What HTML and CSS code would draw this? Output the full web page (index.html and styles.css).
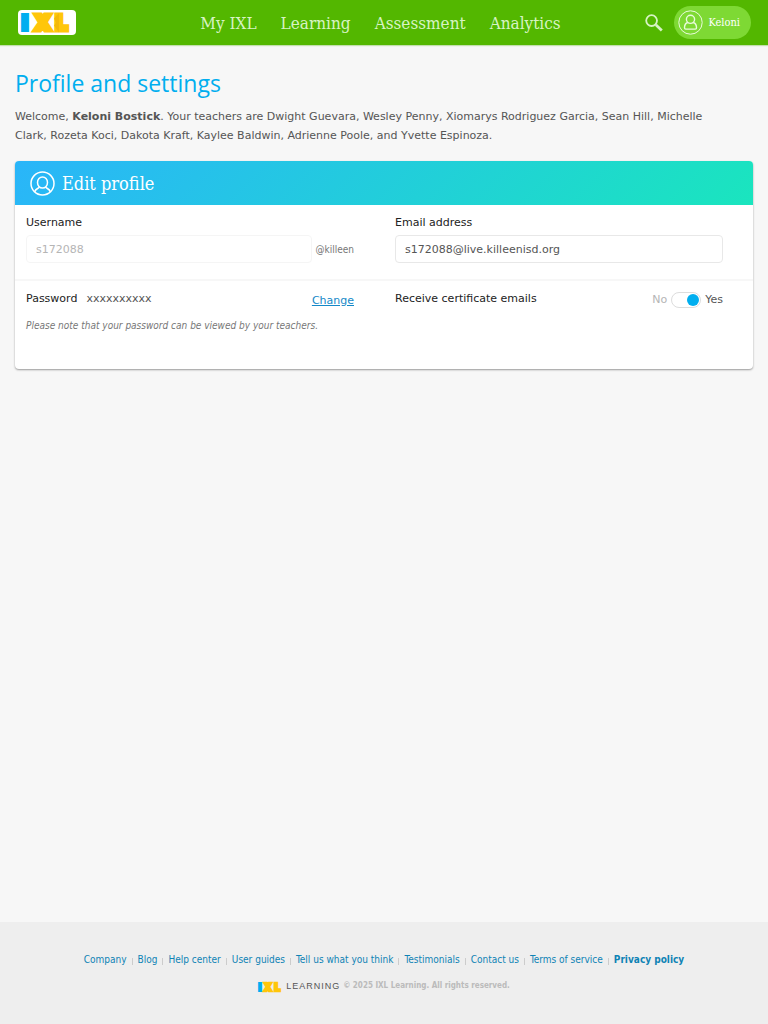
FILE: index.html
```html
<!DOCTYPE html>
<html lang="en">
<head>
    <meta charset="UTF-8">
    <meta name="viewport" content="width=device-width, initial-scale=1.0">
    <title>IXL | Profile and settings</title>
    <link rel="stylesheet" href="styles.css">
</head>
<body>
    <header class="header">
        <a href="#" class="logo" aria-label="IXL">
            <svg width="58" height="25" viewBox="0 0 58 25">
                <rect width="58" height="25" rx="4" fill="#fff"/>
                <text class="logo-letter blue" x="4" y="20">I</text>
                <text class="logo-letter gold" x="17" y="20">X</text>
                <text class="logo-letter gold" x="38" y="20">L</text>
                <path d="M36 8.500l5-5.500v19.500l-5-7 2-2.700z" fill="#f3b909"/>
            </svg>
        </a>
        <nav class="nav">
            <a href="#">My IXL</a>
            <a href="#">Learning</a>
            <a href="#">Assessment</a>
            <a href="#">Analytics</a>
        </nav>
        <div class="tools">
            <button type="button" class="search" aria-label="Search">
                <svg width="18" height="18" viewBox="0 0 18 18" fill="none" stroke="#d7f3c3">
                    <circle cx="6.6" cy="6.6" r="5.4" stroke-width="1.8"/>
                    <path d="M10.8 10.8l6 5.6" stroke-width="2.8"/>
                </svg>
            </button>
            <button type="button" class="user">
                <svg width="25" height="25" viewBox="0 0 25 25" fill="none" stroke="#e9fbdc">
                    <circle cx="12.500" cy="12.500" r="11.700" stroke-width="1"/>
                    <circle cx="12.500" cy="9.300" r="4.100" stroke-width="1.400"/>
                    <path d="M9.800 12.500c-2.300.7-3.300 2.500-3.300 5.300 0 .8.400 1.300 1.200 1.300h9.600c.8 0 1.200-.5 1.200-1.300 0-2.800-1-4.600-3.300-5.300" stroke-width="1.400"/>
                </svg>
                <span>Keloni</span>
            </button>
        </div>
    </header>

    <main class="content">
        <h1>Profile and settings</h1>
        <p class="welcome">Welcome, <strong>Keloni Bostick</strong>. Your teachers are Dwight Guevara, Wesley Penny, Xiomarys Rodriguez Garcia, Sean Hill, Michelle Clark, Rozeta Koci, Dakota Kraft, Kaylee Baldwin, Adrienne Poole, and Yvette Espinoza.</p>

        <form class="card">
            <div class="card-header">
                <svg width="25" height="25" viewBox="0 0 25 25" fill="none" stroke="#fff" stroke-width="1.500">
                    <circle cx="12.500" cy="12.500" r="11.500"/>
                    <ellipse cx="12.500" cy="11.500" rx="5" ry="5.600"/>
                    <path d="M9.500 16c-.5 1.300-4 1.500-4.800 4.800M15.500 16c.5 1.300 4 1.500 4.800 4.800"/>
                </svg>
                <h2>Edit profile</h2>
            </div>
            <div class="row">
                <div class="cell">
                    <label for="username">Username</label>
                    <div class="field">
                        <input type="text" id="username" value="s172088" disabled>
                        <span class="suffix">@killeen</span>
                    </div>
                </div>
                <div class="cell">
                    <label for="email">Email address</label>
                    <div class="field">
                        <input type="email" id="email" value="s172088@live.killeenisd.org">
                    </div>
                </div>
            </div>
            <div class="row last">
                <div class="cell">
                    <div class="line">
                        <span class="name">Password</span>
                        <span class="mask">xxxxxxxxxx</span>
                        <a href="#" class="change">Change</a>
                    </div>
                    <p class="note">Please note that your password can be viewed by your teachers.</p>
                </div>
                <div class="cell">
                    <div class="line">
                        <label for="certs">Receive certificate emails</label>
                        <div class="switch">
                            <span class="no">No</span>
                            <input type="checkbox" id="certs" checked>
                            <span>Yes</span>
                        </div>
                    </div>
                </div>
            </div>
        </form>
    </main>

    <footer class="footer">
        <ul class="links">
            <li><a href="#">Company</a></li>
            <li><a href="#">Blog</a></li>
            <li><a href="#">Help center</a></li>
            <li><a href="#">User guides</a></li>
            <li><a href="#">Tell us what you think</a></li>
            <li><a href="#">Testimonials</a></li>
            <li><a href="#">Contact us</a></li>
            <li><a href="#">Terms of service</a></li>
            <li><a href="#"><strong>Privacy policy</strong></a></li>
        </ul>
        <div class="legal">
            <svg width="25" height="11" viewBox="0 0 50 22">
                <text class="logo-letter blue" x="1" y="19">I</text>
                <text class="logo-letter gold" x="12" y="19">X</text>
                <text class="logo-letter gold" x="33" y="19">L</text>
            </svg>
            <span class="learning">LEARNING</span>
            <span>© 2025 IXL Learning. All rights reserved.</span>
        </div>
    </footer>
</body>
</html>
```
FILE: styles.css
```css
* {
    box-sizing: border-box;
}
body {
    margin: 0;
    min-height: 100vh;
    display: flex;
    flex-direction: column;
    background-color: #f7f7f7;
    font-family: "DejaVu Sans", Verdana, sans-serif;
    font-size: 11px;
    color: #555;
}
h1, h2, p, ul {
    margin: 0;
    padding: 0;
}
button {
    border: none;
    background: none;
    padding: 0;
    cursor: pointer;
}
svg {
    display: block;
    flex: none;
    overflow: visible;
}
.header {
    display: grid;
    grid-template-columns: 1fr auto 1fr;
    align-items: center;
    height: 45px;
    padding: 0 17px 0 18px;
    background-color: #53b700;
    box-shadow: 0 1px 1px #c3dfae;
}
.logo-letter {
    font-family: Inter, sans-serif;
    font-weight: 900;
    font-size: 20px;
}
.blue {
    fill: #00aeef;
    stroke: #00aeef;
    stroke-width: 4px;
}
.gold {
    fill: #ffc60a;
    stroke: #ffc60a;
    stroke-width: 5px;
}
.nav {
    display: flex;
    gap: 24px;
    padding-right: 8px;
}
.nav a {
    font-family: "Roboto Slab", "DejaVu Serif Condensed", "DejaVu Serif", serif;
    font-size: 17px;
    font-weight: 300;
    color: #d7f3c3;
    text-decoration: none;
}
.tools {
    display: flex;
    justify-content: flex-end;
    align-items: center;
    gap: 11px;
}
.user {
    display: flex;
    align-items: center;
    gap: 5px;
    height: 33px;
    padding: 0 11px 0 4px;
    border-radius: 17px;
    background-color: #7ed934;
    color: #fff;
    font-family: "Roboto Slab", "DejaVu Serif Condensed", "DejaVu Serif", serif;
    font-size: 11px;
}
.content {
    flex: 1;
    padding: 22px 15px;
}
h1 {
    font-family: "Trebuchet MS", "Open Sans", sans-serif;
    font-size: 23px;
    line-height: 32px;
    font-weight: 400;
    color: #00aeef;
}
.welcome {
    margin: 8px 0 16px;
    padding-right: 24px;
    line-height: 19px;
}
.card {
    border-radius: 4px;
    background-color: #fff;
    box-shadow: 0 1px 2px #999;
    overflow: hidden;
}
.card-header {
    display: flex;
    align-items: center;
    gap: 7px;
    height: 44px;
    padding: 0 15px;
    background: linear-gradient(135deg, #2ab5f9, #1ae5be);
    color: #fff;
}
h2 {
    font-family: "Roboto Slab", "DejaVu Serif Condensed", "DejaVu Serif", serif;
    font-size: 18px;
    font-weight: 400;
}
.row {
    display: grid;
    grid-template-columns: 1fr 1fr;
    min-height: 76px;
    border-bottom: 2px solid #f7f7f7;
}
.last {
    min-height: 88px;
    border-bottom: none;
}
.cell {
    padding: 11px 30px 0 11px;
}
label, .name {
    display: block;
    line-height: 14px;
    color: #222;
}
.field {
    display: flex;
    align-items: center;
    gap: 4px;
    margin-top: 5px;
}
.field input {
    flex: 1;
    min-width: 0;
    height: 28px;
    padding: 0 9px;
    border: 1px solid #e8e8e8;
    border-radius: 4px;
    background-color: #fff;
    font: inherit;
    color: #555;
}
.field input:disabled {
    border-color: #f5f5f5;
    color: #b5b5b5;
}
.suffix {
    font-family: "DejaVu Sans Condensed", "DejaVu Sans", sans-serif;
    font-size: 10px;
    color: #777;
}
.line {
    display: flex;
    line-height: 14px;
}
.mask {
    margin-left: 9px;
}
.change {
    margin: 2px 0 0 auto;
    color: #1488c8;
}
.note {
    margin-top: 12px;
    font-family: "DejaVu Sans Condensed", "DejaVu Sans", sans-serif;
    font-size: 10px;
    font-style: italic;
    color: #777;
}
.switch {
    display: flex;
    align-items: center;
    gap: 4px;
    margin-left: auto;
}
.no {
    color: #b5b5b5;
}
.switch input {
    appearance: none;
    display: flex;
    justify-content: flex-end;
    align-items: center;
    width: 30px;
    height: 16px;
    margin: 0;
    padding: 0 1px;
    border: 1px solid #ddd;
    border-radius: 8px;
}
.switch input::before {
    content: "";
    width: 12px;
    height: 12px;
    border-radius: 50%;
    background-color: #00aeef;
}
.footer {
    height: 102px;
    padding-top: 30px;
    background-color: #eee;
}
.links {
    display: flex;
    justify-content: center;
    list-style: none;
    font-family: "DejaVu Sans Condensed", "DejaVu Sans", sans-serif;
    font-size: 10px;
    line-height: 16px;
}
.links li + li::before {
    content: "";
    display: inline-block;
    width: 1px;
    height: 7px;
    margin: 0 5px;
    background-color: #ccc;
    vertical-align: -2px;
}
.links a {
    color: #0e83b5;
    text-decoration: none;
}
.legal {
    display: flex;
    justify-content: center;
    align-items: center;
    gap: 3px;
    margin-top: 11px;
    font-family: "DejaVu Sans Condensed", "DejaVu Sans", sans-serif;
    font-size: 8px;
    font-weight: 700;
    line-height: 14px;
    color: #bbb;
}
.learning {
    font-family: "Liberation Sans", Arial, sans-serif;
    font-size: 9px;
    font-weight: 400;
    letter-spacing: 1px;
    color: #555;
}
```
